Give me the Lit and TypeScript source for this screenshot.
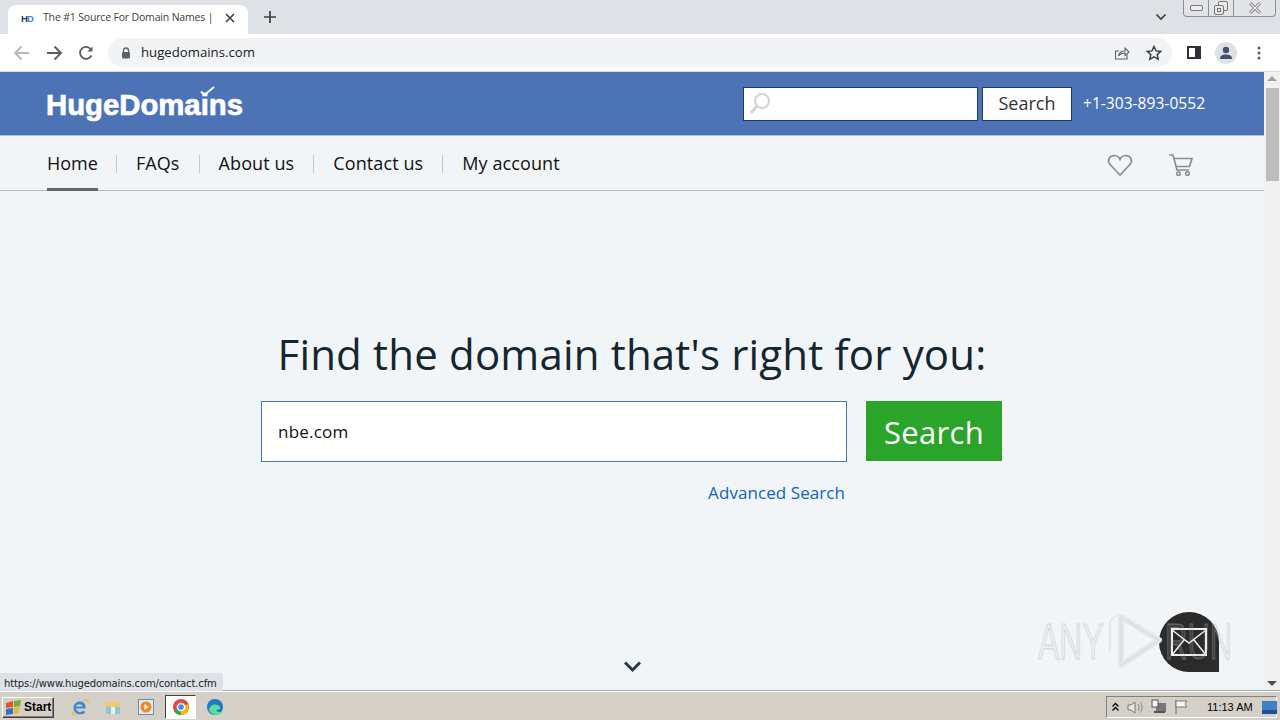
import { LitElement, html, css } from "lit";
import { customElement } from "lit/decorators.js";

@customElement("app-root")
export class AppRoot extends LitElement {
  static styles = css`
    :host { display: block; width: 1280px; height: 720px; overflow: hidden; position: relative; font-family: "Open Sans", sans-serif; background: #f2f5f8; }
    * { box-sizing: border-box; }
    svg { display: block; flex: none; }
    .tabs { height: 34px; background: #dee1e6; display: flex; align-items: flex-end; }
    .tab { width: 240px; height: 29px; margin-left: 8px; background: #fff; border-radius: 8px 8px 0 0; display: flex; align-items: center; padding: 0 10px 3px 13px; font: 10.5px "Open Sans", sans-serif; color: #3c4043; }
    .fav { width: 14px; font: 900 9.5px "Liberation Sans", sans-serif; letter-spacing: -1px; color: #1c3a6e; margin-right: 8px; }
    .fav b { color: #4d80c8; font-weight: 900; }
    .tab-title { width: 176px; white-space: nowrap; letter-spacing: -0.17px; padding-bottom: 2px; }
    .tab svg { margin-left: 5px; }
    .newtab { margin: 0 0 4px 15px; align-self: flex-end; padding-bottom: 6px; }
    .tabs-space { flex: 1; }
    .tabs-right { display: flex; align-self: flex-start; }
    .chev { margin: 13px 16px 0 0; }
    .winbtns { width: 93px; height: 17px; border: 1px solid #8b8f96; border-top: 0; border-radius: 0 0 4px 4px; margin-right: 4px; display: flex; background: #e2e4e8; }
    .winbtns div { display: flex; align-items: center; justify-content: center; border-right: 1px solid #8b8f96; }
    .winbtns div:nth-child(1) { width: 25px; } .winbtns div:nth-child(2) { width: 25px; } .winbtns div:nth-child(3) { flex: 1; border-right: 0; }
    .toolbar { height: 38px; background: #fff; display: flex; align-items: center; padding: 0 0 0 13px; border-bottom: 1px solid #dadce0; }
    .nav-icons { display: flex; gap: 16px; width: 95px; }
    .nav-icons svg:last-child { margin-left: -1px; }
    .omni { width: 1064px; height: 29px; background: #f1f3f4; border-radius: 15px; display: flex; align-items: center; padding: 0 10px 0 13px; font: 13.2px "Open Sans", sans-serif; color: #202124; }
    .omni span { flex: 1; margin-left: 10px; padding-bottom: 2px; }
    .omni-right { display: flex; gap: 16px; align-items: center; }
    .tool-right { display: flex; align-items: center; margin-left: 15px; }
    .avatar { width: 22px; height: 22px; margin-left: 14px; border-radius: 50%; background: #dfe1e5; display: flex; align-items: center; justify-content: center; overflow: hidden; }
    .dots { margin-left: 20px; }
    .content { height: 618px; display: flex; }
    .page { width: 1264px; height: 618px; display: flex; flex-direction: column; }
    .head { height: 64px; flex: none; background: #4d73b7; border-bottom: 1px solid #a9c0e2; display: flex; align-items: center; padding: 0 59px 0 46px; }
    .logo { font: 700 29.3px "Liberation Sans", sans-serif; color: #fff; position: relative; line-height: 1; margin-top: 2px; -webkit-text-stroke: 0.7px #fff; white-space: nowrap; }
    .logo svg { position: absolute; left: 154px; top: -4px; }
    .head-space { flex: 1; }
    .hsearch { width: 235px; height: 34px; background: #fff; border: 1px solid #1f3b6d; display: flex; align-items: center; padding-left: 5px; }
    .hbtn { width: 90px; height: 34px; margin-left: 4px; background: #fff; border: 1px solid #1f3b6d; font-size: 18px; color: #333; display: flex; align-items: center; justify-content: center; padding-bottom: 2px; }
    .phone { margin: 0 0 2px 11px; font-size: 15.6px; color: #fff; white-space: nowrap; width: 122px; }
    .nav { height: 55px; flex: none; border-bottom: 1px solid #b9bdc2; display: flex; padding: 0 70px 0 47px; }
    .nav-item { display: flex; align-items: center; font-size: 18px; color: #111; height: 55px; letter-spacing: 0.1px; padding-bottom: 2px; }
    .nav-item.active { border-bottom: 3px solid #666; padding: 1px 0 0; letter-spacing: 0; }
    .sep { width: 1px; height: 18px; background: #c4c8cc; margin: 19px 19px 0; }
    .sep.first { margin-left: 18px; }
    .nav-space { flex: 1; }
    .nav-icon { display: flex; align-items: center; padding-top: 3px; }
    .main { flex: 1; display: flex; flex-direction: column; align-items: center; position: relative; padding-top: 134px; }
    h1 { margin: 0; font-weight: 400; font-size: 42px; line-height: 57px; color: #14262f; letter-spacing: 0.18px; white-space: nowrap; }
    .form { display: flex; margin-top: 19px; gap: 19px; width: 742px; }
    .bigin { width: 586px; height: 61px; background: #fff; border: 1px solid #4d73b7; font-size: 17px; color: #111; display: flex; align-items: center; padding-left: 16px; letter-spacing: 0.2px; }
    .bigbtn { width: 136px; height: 60px; background: #2aa52a; color: #fff; font-size: 31px; display: flex; align-items: center; justify-content: center; letter-spacing: 0.3px; padding-top: 1px; }
    .adv { width: 742px; margin-top: 19px; padding-right: 158px; text-align: right; color: #0a66c2; font-size: 17px; line-height: 23px; letter-spacing: 0.07px; }
    .down { position: absolute; left: 623px; top: 469px; }
    .scrollbar { width: 16px; background: #f1f1f1; display: flex; flex-direction: column; align-items: center; justify-content: space-between; padding: 4px 0; position: relative; }
    .thumb { position: absolute; left: 2px; top: 16px; width: 13px; height: 93px; background: #bdbdbd; }
    .arrow { width: 0; height: 0; border-left: 5px solid transparent; border-right: 5px solid transparent; }
    .arrow.up { border-bottom: 5px solid #a3a3a3; }
    .arrow.dn { border-top: 5px solid #505050; }
    .status { position: absolute; left: 0; top: 673px; height: 18px; width: 223px; background: #dee1e6; border-radius: 0 3px 0 0; font-family: "DejaVu Sans", sans-serif; font-size: 10px; letter-spacing: -0.13px; line-height: 18px; padding: 2px 0 0 4px; color: #202124; white-space: nowrap; }
    .bubble { position: absolute; left: 1159px; top: 612px; width: 60px; height: 60px; background: #2b2b2b; border-radius: 30px 30px 0 30px; display: flex; align-items: center; justify-content: center; }
    .wm { position: absolute; left: 1038px; top: 608px; width: 196px; height: 62px; }
    .wm-text { position: absolute; top: 9px; font: 400 50px "Liberation Sans", sans-serif; transform-origin: left top; color: rgba(190, 195, 200, 0.18); -webkit-text-stroke: 1px rgba(170, 175, 180, 0.42); line-height: 1; }
    .wm-any { left: 0; transform: scaleX(0.64); }
    .wm-run { left: 127px; transform: scaleX(0.62); }
    .wm-play { position: absolute; left: 71px; top: 1px; }
    .task { height: 30px; background: #d4d0c8; border-top: 1px solid #a3a3a3; box-shadow: inset 0 1px 0 #fff; display: flex; align-items: center; padding: 3px 3px 0 2px; }
    .start { width: 52px; height: 21px; display: flex; align-items: center; border: 1px solid; border-color: #fff #404040 #404040 #fff; box-shadow: inset -1px -1px 0 #808080; font: 700 12px "Liberation Sans", sans-serif; color: #000; padding-left: 2px; gap: 2px; }
    .tk { display: flex; align-items: center; gap: 15px; margin-left: 17px; }
    .tk .on { width: 31px; height: 24px; background: #fff; border: 1px solid; border-color: #404040 #fff #fff #404040; display: flex; align-items: center; justify-content: center; margin: 0 -5px; }
    .task-space { flex: 1; }
    .tray { width: 171px; height: 22px; border: 1px solid; border-color: #808080 #fff #fff #808080; display: flex; align-items: center; padding-left: 4px; gap: 7px; font: 11px "Liberation Sans", sans-serif; color: #000; white-space: nowrap; }
    .clock { margin-left: 11px; }
    .dsk { margin-left: 2px; }
  `;

  render() {
    return html`
      <div class="tabs">
        <div class="tab">
          <div class="fav">H<b>D</b></div>
          <div class="tab-title">The #1 Source For Domain Names |</div>
          <svg width="12" height="12" viewBox="0 0 12 12"><path d="M2 2l8 8M10 2l-8 8" stroke="#3c4043" stroke-width="1.6"/></svg>
        </div>
        <div class="newtab"><svg width="14" height="14" viewBox="0 0 14 14"><path d="M7 1v12M1 7h12" stroke="#3c4043" stroke-width="1.7"/></svg></div>
        <div class="tabs-space"></div>
        <div class="tabs-right">
          <svg class="chev" width="12" height="8" viewBox="0 0 12 8"><path d="M1.5 1.5L6 6l4.5-4.5" fill="none" stroke="#3c4043" stroke-width="1.7"/></svg>
          <div class="winbtns">
            <div><svg width="13" height="7" viewBox="0 0 13 7"><rect x=".5" y=".5" width="12" height="5" rx="1.5" fill="#eee" stroke="#777"/></svg></div>
            <div><svg width="14" height="14" viewBox="0 0 14 14"><rect x="4.5" y=".5" width="9" height="9" rx="1.5" fill="#e8e8e8" stroke="#777"/><rect x=".5" y="4.5" width="9" height="9" rx="1.5" fill="#e8e8e8" stroke="#777"/><rect x="3.5" y="7.5" width="3" height="3" fill="none" stroke="#777"/></svg></div>
            <div><svg width="14" height="12" viewBox="0 0 14 12"><path d="M2 1l10 10M12 1L2 11" stroke="#777" stroke-width="3"/><path d="M2 1l10 10M12 1L2 11" stroke="#eee" stroke-width="1.2"/></svg></div>
          </div>
        </div>
      </div>
      <div class="toolbar">
        <div class="nav-icons">
          <svg width="17" height="16" viewBox="0 0 17 16"><path d="M16 8H2M8.5 1.5L2 8l6.500 6.500" fill="none" stroke="#b4b6b9" stroke-width="1.800"/></svg>
          <svg width="17" height="16" viewBox="0 0 17 16"><path d="M1 8h14M8.500 1.500L15 8l-6.500 6.500" fill="none" stroke="#5a5d61" stroke-width="1.800"/></svg>
          <svg width="16" height="16" viewBox="0 0 16 16"><path d="M13.500 10.500A6 6 0 1 1 13 4.500" fill="none" stroke="#5a5d61" stroke-width="1.800"/><path d="M14.500 1.500v5h-5z" fill="#5a5d61"/></svg>
        </div>
        <div class="omni">
          <svg width="10" height="12" viewBox="0 0 10 12"><path d="M2.500 5V3.500a2.500 2.500 0 0 1 5 0V5" fill="none" stroke="#5f6368" stroke-width="1.300"/><rect x="1" y="5" width="8" height="6.500" rx="1" fill="#5f6368"/></svg>
          <span>hugedomains.com</span>
          <div class="omni-right">
            <svg width="16" height="16" viewBox="0 0 16 16"><path d="M13 9.500V14H1.500V6H5" fill="none" stroke="#5f6368" stroke-width="1.100"/><path d="M4.500 11c.5-3 3-5 6.500-5V3l4 4-4 3.500V8c-3 0-5 1-6.500 3z" fill="none" stroke="#5f6368" stroke-width="1.100"/></svg>
            <svg width="16" height="16" viewBox="0 0 16 16"><path d="M8 1.500l2 4.400 4.800.5-3.600 3.200 1 4.700L8 11.900l-4.200 2.400 1-4.700L1.200 6.400 6 5.900z" fill="none" stroke="#3c4043" stroke-width="1.500"/></svg>
          </div>
        </div>
        <div class="tool-right">
          <svg width="14" height="13" viewBox="0 0 14 13"><rect x="1" y="1" width="12" height="11" fill="none" stroke="#2f3237" stroke-width="2"/><rect x="8" y="1" width="5" height="11" fill="#2f3237"/></svg>
          <div class="avatar"><svg width="14" height="14" viewBox="0 0 14 14"><circle cx="7" cy="4" r="3.200" fill="#455069"/><path d="M1 13c0-3.500 2.500-4.500 6-4.500s6 1 6 4.500z" fill="#455069"/></svg></div>
          <svg class="dots" width="4" height="14" viewBox="0 0 4 14"><circle cx="2" cy="2" r="1.500" fill="#5a5d61"/><circle cx="2" cy="7" r="1.500" fill="#5a5d61"/><circle cx="2" cy="12" r="1.500" fill="#5a5d61"/></svg>
        </div>
      </div>
      <div class="content">
        <div class="page">
          <div class="head">
            <div class="logo">HugeDomains
              <svg width="15" height="11" viewBox="0 0 15 11"><path d="M1 5.500l3.500 3.500L14 1" fill="none" stroke="#fff" stroke-width="1.800"/></svg>
            </div>
            <div class="head-space"></div>
            <div class="hsearch">
              <svg width="22" height="24" viewBox="0 0 22 24"><circle cx="13" cy="9" r="7" fill="none" stroke="#d4d4d4" stroke-width="2"/><path d="M8 14l-6 7" stroke="#d4d4d4" stroke-width="3"/></svg>
            </div>
            <div class="hbtn">Search</div>
            <div class="phone">+1-303-893-0552</div>
          </div>
          <div class="nav">
            <div class="nav-item active">Home</div><div class="sep first"></div>
            <div class="nav-item">FAQs</div><div class="sep"></div>
            <div class="nav-item">About us</div><div class="sep"></div>
            <div class="nav-item">Contact us</div><div class="sep"></div>
            <div class="nav-item">My account</div>
            <div class="nav-space"></div>
            <div class="nav-icon">
              <svg width="26" height="24" viewBox="0 0 26 24"><path d="M13 22L3 11.500C0 8 2 2.500 7 2.500c3 0 5 1.500 6 4 1-2.500 3-4 6-4 5 0 7 5.500 4 9z" fill="none" stroke="#8d8d8d" stroke-width="1.700"/></svg>
              <svg style="margin-left:35px" width="26" height="24" viewBox="0 0 26 24"><path d="M1 2h4l4 15h12M6 5.500h18l-2.500 8H8" fill="none" stroke="#8d8d8d" stroke-width="1.700"/><circle cx="10.500" cy="20.500" r="1.800" fill="none" stroke="#8d8d8d" stroke-width="1.500"/><circle cx="19.500" cy="20.500" r="1.800" fill="none" stroke="#8d8d8d" stroke-width="1.500"/></svg>
            </div>
          </div>
          <div class="main">
            <h1>Find the domain that's right for you:</h1>
            <div class="form">
              <div class="bigin">nbe.com</div>
              <div class="bigbtn">Search</div>
            </div>
            <div class="adv">Advanced Search</div>
            <svg class="down" width="19" height="13" viewBox="0 0 19 13"><path d="M2 2.500l7.500 7.500L17 2.500" fill="none" stroke="#2c3a42" stroke-width="3"/></svg>
          </div>
        </div>
        <div class="scrollbar"><div class="arrow up"></div><div class="thumb"></div><div class="arrow dn"></div></div>
      </div>
      <div class="task">
        <div class="start">
          <svg width="17" height="15" viewBox="0 0 17 15"><path d="M1 3l7-2v6l-7 1z" fill="#d9582b"/><path d="M9 1l7-1-1 6-6 1z" fill="#6fae3c"/><path d="M1 9l7-1v6l-7 1z" fill="#3a6fc4"/><path d="M9 8l6-1-1 6-5 1z" fill="#e9b92f"/></svg>
          Start
        </div>
        <div class="tk">
          <svg width="18" height="18" viewBox="0 0 18 18"><path d="M14.500 10.500H5c.3 3.500 5 4.500 8 2l1 2.500c-5 3-11.500 1-11.500-5.500C2.500 4 9.500 1.500 13 5c1.500 1.500 1.700 3.500 1.500 5.500zM5 8.500h6.500C11 5.500 6 5.500 5 8.500z" fill="#3b86d8"/><path d="M3 13C0 17 2 18 6 15M12 3c3-2 6-2 5 2" fill="none" stroke="#e8b93a" stroke-width="1.200"/></svg>
          <svg width="18" height="18" viewBox="0 0 18 18"><path d="M2 5h14v11H2z" fill="#8fc4dc"/><path d="M1 4h16l-1 5H2z" fill="#eec96e"/><path d="M7 9h4v7H7z" fill="#e8f0f2"/></svg>
          <svg width="18" height="18" viewBox="0 0 18 18"><rect x="1.500" y="1.500" width="15" height="15" fill="#dfe8f2" stroke="#6d8db5"/><circle cx="9" cy="9" r="5.500" fill="#ee8a1d"/><path d="M7.500 6l4 3-4 3z" fill="#fff"/></svg>
          <div class="on"><svg width="18" height="18" viewBox="0 0 18 18"><circle cx="9" cy="9" r="8" fill="#e8463a"/><path d="M9 9L2 13a8 8 0 0 0 7 4z" fill="#34a853"/><path d="M9 9l7 -3a8 8 0 0 1-7 11z" fill="#fbbc05"/><circle cx="9" cy="9" r="3.600" fill="#4a8af4" stroke="#fff" stroke-width="1.500"/></svg></div>
          <svg width="18" height="18" viewBox="0 0 18 18"><circle cx="9" cy="9" r="8" fill="#1c78c8"/><path d="M3 12c1-6 8-7 11-3 1 2-1 3-4 3 1 2 4 3 7 1-2 4-7 5-10 3-2-1-3-2-4-4z" fill="#5ddb9b"/></svg>
        </div>
        <div class="task-space"></div>
        <div class="tray">
          <svg width="9" height="10" viewBox="0 0 9 10"><path d="M1.500 4.500l3-3 3 3M1.500 8.500l3-3 3 3" fill="none" stroke="#000" stroke-width="1.300"/></svg>
          <svg width="17" height="15" viewBox="0 0 17 15"><path d="M1 5h3l4-3v11l-4-3H1z" fill="#e8e6e0" stroke="#777"/><path d="M11 4c1.500 2 1.500 5 0 7M13.500 2.500c2 3 2 7 0 10" fill="none" stroke="#888"/></svg>
          <svg width="16" height="16" viewBox="0 0 16 16"><rect x="5" y="4" width="10" height="9" fill="#777"/><rect x="1" y="1" width="6" height="7" fill="#f4f4f4" stroke="#555"/><path d="M3 13h11" stroke="#555" stroke-width="2"/></svg>
          <svg width="15" height="16" viewBox="0 0 15 16"><path d="M2 1v14" stroke="#666"/><path d="M2 2h11l-2 3 2 3H2z" fill="#f6f6f4" stroke="#777"/></svg>
          <span class="clock">11:13 AM</span>
          <svg class="dsk" width="15" height="13" viewBox="0 0 15 13"><rect width="15" height="13" fill="#3f80c8"/><rect y="9" width="15" height="4" fill="#1e4f8e"/></svg>
        </div>
      </div>
      <div class="status">https://www.hugedomains.com/contact.cfm</div>
      <div class="bubble">
        <svg width="36" height="28" viewBox="0 0 36 28"><rect x="1" y="1" width="34" height="26" fill="none" stroke="#f2f2f2" stroke-width="2"/><path d="M1 2l17 13L35 2M1 27l12-15M35 27L23 12" fill="none" stroke="#f2f2f2" stroke-width="1.500"/></svg>
      </div>
      <div class="wm">
        <span class="wm-text wm-any">ANY</span>
        <svg class="wm-play" width="56" height="62" viewBox="0 0 56 62"><path d="M12 8L50 31 12 56z" fill="none" stroke="#e4e7ea" stroke-width="6" stroke-linejoin="round"/><path d="M12 8L50 31 12 56zM9 5L1 12v30" fill="none" stroke="#d6dade" stroke-width="1"/></svg>
        <span class="wm-text wm-run">RUN</span>
      </div>
    `;
  }
}
